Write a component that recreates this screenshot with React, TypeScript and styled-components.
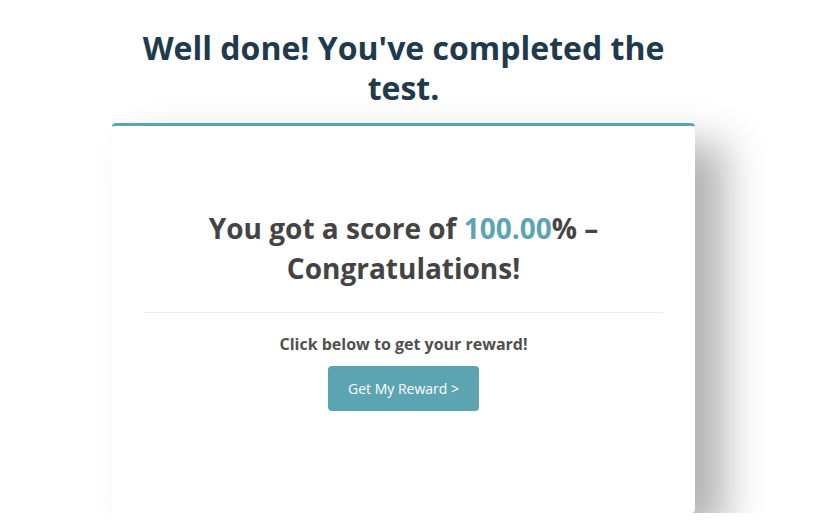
import React from "react";
import styled, { createGlobalStyle } from "styled-components";

const Global = createGlobalStyle`
  html, body { margin: 0; padding: 0; background: #fff; }
  body { font-family: "Open Sans", "Noto Sans", sans-serif; overflow: hidden; }
`;

const Page = styled.div`
  width: 583px;
  margin-left: 112px;
  padding-top: 28px;
  display: flex;
  flex-direction: column;
  align-items: center;
`;

const Title = styled.h1`
  margin: 0 0 15px;
  padding: 0 20px;
  font-size: 32px;
  line-height: 40px;
  font-weight: 700;
  color: #1e3a4c;
  text-align: center;
`;

const Card = styled.div`
  box-sizing: border-box;
  width: 100%;
  height: 390px;
  background: #fff;
  border-top: 3px solid #5ca4b2;
  border-radius: 4px;
  box-shadow: 30px 20px 40px rgba(0, 0, 0, 0.3);
  padding: 82px 32px 0;
  display: flex;
  flex-direction: column;
  align-items: center;
`;

const Score = styled.h2`
  margin: 0;
  font-size: 28px;
  line-height: 40px;
  font-weight: 700;
  color: #444;
  text-align: center;
  max-width: 430px;
`;

const Accent = styled.span`
  color: #5ca4b2;
`;

const Divider = styled.hr`
  width: 100%;
  border: 0;
  border-top: 1px solid #ececec;
  margin: 24px 0 20px;
`;

const Prompt = styled.p`
  margin: 0 0 11px;
  font-size: 16px;
  line-height: 22px;
  font-weight: 700;
  color: #505050;
`;

const Button = styled.button`
  width: 151px;
  height: 45px;
  border: 0;
  border-radius: 4px;
  background: #5ca4b2;
  color: #fff;
  font-family: "Open Sans", "Noto Sans", sans-serif;
  font-size: 14px;
  cursor: pointer;
`;

export default function App() {
  return (
    <>
      <Global />
      <Page>
        <Title>Well done! You've completed the test.</Title>
        <Card>
          <Score>
            You got a score of <Accent>100.00</Accent>% – Congratulations!
          </Score>
          <Divider />
          <Prompt>Click below to get your reward!</Prompt>
          <Button>Get My Reward &gt;</Button>
        </Card>
      </Page>
    </>
  );
}
